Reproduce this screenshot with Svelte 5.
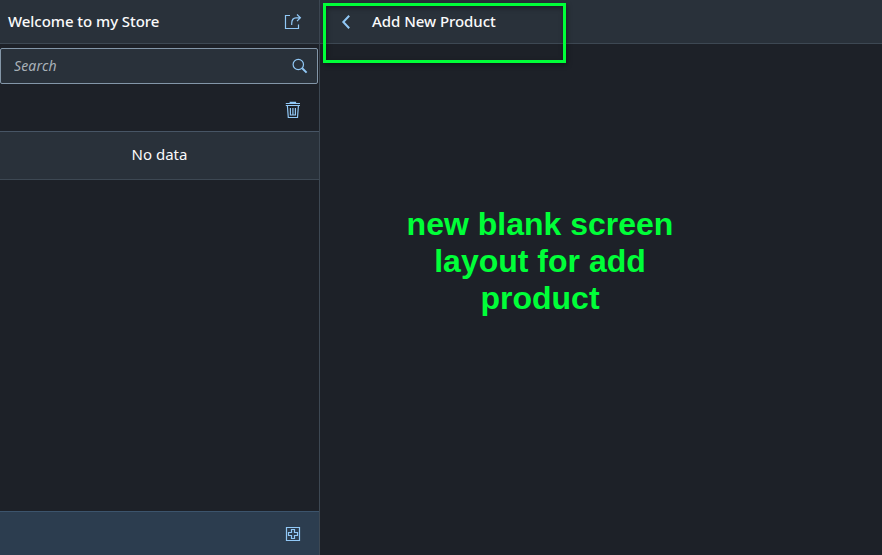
<script>
  let query = $state('');
</script>

<div class="app">
  <aside>
    <header class="bar">
      <h1 class="store">Welcome to my Store</h1>
      <button class="icon" aria-label="Share">
        <svg width="18" height="17" viewBox="0 0 18 17"><path d="M6 2.5H1.5V15.5H14.5V11.5M7.7 12V10.5C7.7 7 9.5 4.8 12 4.8H16M13 1.5L16.4 4.8L13 8.1" /></svg>
      </button>
    </header>
    <label class="search">
      <input placeholder="Search" bind:value={query} />
      <svg width="16" height="16" viewBox="0 0 16 16"><circle cx="6.3" cy="6.5" r="5.2" /><path d="M10.2 10.3L14.6 14.6" stroke-width="2" /></svg>
    </label>
    <div class="tools">
      <button class="icon" aria-label="Delete">
        <svg width="16" height="18" viewBox="0 0 16 18"><path d="M.8 2.5H15M5.2 2V1.3H10.5V2M.8 4.5H15M2.4 5L3.3 16.5H12.5L13.4 5M5.4 7V14H10.4V7M7.9 7V14" /></svg>
      </button>
    </div>
    <div class="empty"><span>No data</span></div>
    <div class="space"></div>
    <footer>
      <button class="icon" aria-label="Add">
        <svg width="16" height="16" viewBox="0 0 16 16"><path d="M1.5 1.5H14.5V14.5H1.5ZM6.5 3.5H9.5V6.5H12.5V9.5H9.5V12.5H6.5V9.5H3.5V6.5H6.5Z" /></svg>
      </button>
    </footer>
  </aside>
  <main>
    <header class="bar">
      <button class="back" aria-label="Back">
        <svg width="10" height="16" viewBox="0 0 10 16"><path d="M8.2 1.7L2.3 8L8.2 14.3" stroke-width="2" /></svg>
      </button>
      <h2 class="title">Add New Product</h2>
    </header>
    <p class="note">new blank screen<br />layout for add<br />product</p>
    <div class="highlight"></div>
  </main>
</div>

<style>
  .app {
    display: flex;
    width: 882px;
    height: 555px;
    overflow: hidden;
    background: #1d2128;
    color: #fafafa;
    font: 15px 'Noto Sans', sans-serif;
  }
  aside {
    display: flex;
    flex-direction: column;
    box-sizing: border-box;
    width: 320px;
    border-right: 1px solid #3d4853;
  }
  main {
    position: relative;
    flex: 1;
  }
  .bar {
    display: flex;
    align-items: center;
    box-sizing: border-box;
    height: 44px;
    background: #29313a;
    border-bottom: 1px solid #3d4853;
  }
  aside .bar {
    justify-content: space-between;
    padding: 0 17px 0 8px;
  }
  h1,
  h2 {
    margin: 0;
    padding-bottom: 2px;
    font-size: 15px;
    font-weight: 500;
    line-height: 20px;
    letter-spacing: -0.05px;
    white-space: nowrap;
  }
  button {
    display: flex;
    padding: 0;
    border: 0;
    background: none;
  }
  svg {
    display: block;
    flex: none;
    fill: none;
    stroke: #91c8f6;
    stroke-width: 1.2;
  }
  .search {
    display: flex;
    align-items: center;
    box-sizing: border-box;
    width: 318px;
    height: 36px;
    margin-top: 4px;
    padding: 0 9px 0 13px;
    border: 1px solid #8396a8;
    border-radius: 2px;
    background: #29313a;
  }
  input {
    flex: 1;
    min-width: 0;
    padding: 0 0 2px;
    border: 0;
    outline: 0;
    background: none;
    color: #fafafa;
    font: italic 14px 'Noto Sans', sans-serif;
    letter-spacing: 0.15px;
  }
  input::placeholder {
    color: #a8b0b8;
    opacity: 1;
  }
  .tools {
    display: flex;
    align-items: center;
    justify-content: flex-end;
    height: 47px;
    padding: 5px 18px 0 0;
    box-sizing: border-box;
  }
  .empty {
    display: flex;
    align-items: center;
    justify-content: center;
    box-sizing: border-box;
    height: 49px;
    padding-bottom: 4px;
    border-top: 1px solid #475565;
    border-bottom: 1px solid #3d4853;
    background: #29313a;
  }
  .space {
    flex: 1;
  }
  footer {
    display: flex;
    align-items: center;
    justify-content: flex-end;
    box-sizing: border-box;
    height: 44px;
    padding: 1px 18px 0 0;
    border-top: 1px solid #3c546c;
    background: #2c3d4f;
  }
  .back {
    margin: 0 21px 0 21px;
  }
  .note {
    width: 440px;
    margin: 162px 0 0;
    color: #00ff38;
    font: bold 32px/37px 'Liberation Sans', Arial, sans-serif;
    text-align: center;
  }
  .highlight {
    position: absolute;
    top: 3px;
    left: 3px;
    box-sizing: border-box;
    width: 243px;
    height: 60px;
    border: 3px solid #00ff38;
    box-shadow: 1px 2px 5px #0006, inset 1px 2px 5px #0006;
    pointer-events: none;
  }
</style>
